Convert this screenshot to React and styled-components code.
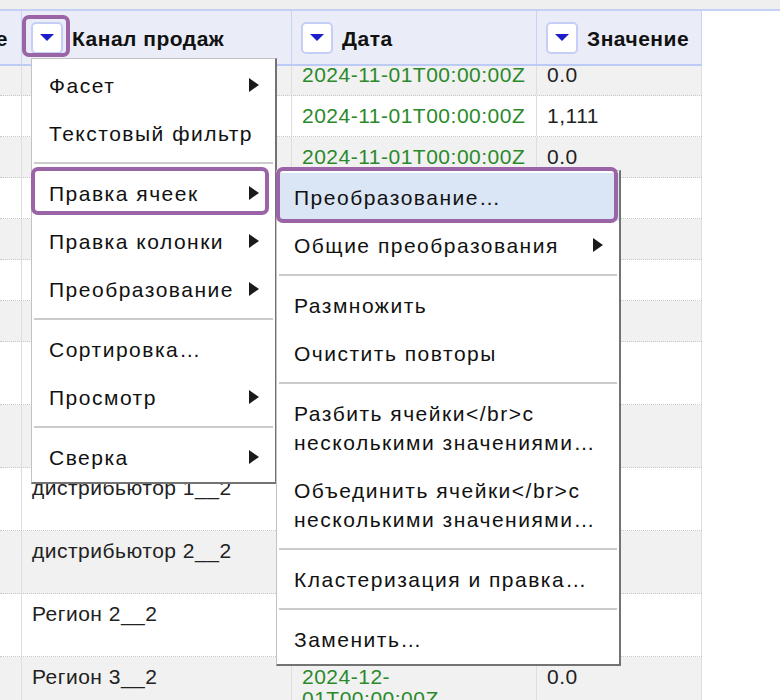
import React from 'react';
import styled, { createGlobalStyle, css } from 'styled-components';

const GlobalStyle = createGlobalStyle`
  html, body {
    margin: 0;
    padding: 0;
    background: #fff;
  }
  body {
    font-family: "Liberation Sans", Arial, sans-serif;
    overflow: hidden;
  }
`;

const COLS = '22px 270px 245px 165px';
const PURPLE = '#9b64a7';

const Page = styled.div`
  position: relative;
  width: 780px;
  height: 700px;
  overflow: hidden;
`;

const TopStrip = styled.div`
  height: 9px;
  background: #efefef;
  border-bottom: 2px solid #c4d0f6;
`;

const HeaderRow = styled.div`
  display: grid;
  grid-template-columns: ${COLS};
  width: 702px;
  height: 53px;
  background: #eaedf7;
  border-bottom: 2px solid #bccaf6;
`;

const HeaderCell = styled.div`
  display: flex;
  align-items: center;
  justify-content: ${p => (p.$clip ? 'flex-end' : 'flex-start')};
  gap: 9px;
  padding: ${p => (p.$clip ? '2px 13px 0 0' : '2px 0 0 9px')};
  border-right: 1px solid #c9d4f4;
  overflow: ${p => (p.$clip ? 'hidden' : 'visible')};
  font-size: 21px;
  letter-spacing: 0.5px;
  font-weight: 700;
  color: #111;
  white-space: nowrap;
`;

const DropButton = styled.span`
  position: relative;
  flex: none;
  width: 28px;
  height: 28px;
  margin-top: -2px;
  border: 2px solid #c5cff6;
  border-radius: 5px;
  background: #fff;
  display: flex;
  align-items: center;
  justify-content: center;

  &::before {
    content: '';
    border-top: 7px solid #1d1dc9;
    border-left: 7.5px solid transparent;
    border-right: 7.5px solid transparent;
  }

  ${p => p.$marked && css`
    &::after {
      content: '';
      position: absolute;
      inset: -9px -9px -5px -11px;
      border: 4px solid ${PURPLE};
      border-radius: 7px;
    }
  `}
`;

const Body = styled.div`
  height: 634px;
  overflow: hidden;
`;

const BodyInner = styled.div`
  margin-top: -11px;
`;

const Row = styled.div`
  display: grid;
  grid-template-columns: ${COLS};
  width: 702px;
  background: ${p => (p.$alt ? '#f1f1f1' : '#fff')};
  border-bottom: 1px dotted #c8c8c8;
`;

const Cell = styled.div`
  padding: 9px 10px;
  line-height: 22px;
  font-size: 21px;
  letter-spacing: 0.5px;
  color: ${p => (p.$date ? '#2a8a2a' : '#222')};
  border-right: 1px solid #dedede;
  overflow: hidden;
  white-space: nowrap;
`;

const Line = styled.span`
  display: block;
`;

const Menu = styled.div`
  position: absolute;
  left: ${p => p.$x}px;
  top: ${p => p.$y}px;
  width: ${p => p.$w}px;
  box-sizing: border-box;
  background: #fff;
  border: 1px solid #c3c3c3;
  border-right: 2px solid #737373;
  border-bottom: 2px solid #737373;
  padding: 2px 0 1px;
  font-size: 21px;
  letter-spacing: 1.5px;
  color: #111;
`;

const Item = styled.div`
  position: relative;
  display: flex;
  align-items: center;
  justify-content: space-between;
  box-sizing: border-box;
  min-height: 48px;
  padding: 9.5px 16px 9.5px 17px;
  line-height: 29px;
  white-space: nowrap;
  background: ${p => (p.$active ? '#dae5f6' : 'transparent')};

  ${p => p.$box && css`
    &::after {
      content: '';
      position: absolute;
      inset: ${p.$box.map(v => `${v}px`).join(' ')};
      border: 4px solid ${PURPLE};
      border-radius: 7px;
      pointer-events: none;
    }
  `}
`;

const Arrow = styled.span`
  flex: none;
  width: 0;
  height: 0;
  margin-left: 8px;
  border-left: 10px solid #1a1a1a;
  border-top: 7.5px solid transparent;
  border-bottom: 7.5px solid transparent;
`;

const Separator = styled.div`
  height: 2px;
  margin: 5px 2px;
  background: #cbcbcb;
`;

const NOV = ['2024-11-01T00:00:00Z'];
const DEC = ['2024-12-', '01T00:00:00Z'];

const rows = [
  { channel: 'дистрибьютор 1__1', date: NOV, value: '0.0' },
  { channel: 'дистрибьютор 2__1', date: NOV, value: '1,111' },
  { channel: 'Регион 1__1', date: NOV, value: '0.0' },
  { channel: 'Регион 2__1', date: NOV, value: '0.0' },
  { channel: 'Регион 3__1', date: NOV, value: '0.0' },
  { channel: 'Регион 1__2', date: NOV, value: '0.0' },
  { channel: 'Регион 4__1', date: NOV, value: '0.0' },
  { channel: 'Регион 5__1', date: DEC, value: '0.0' },
  { channel: 'Регион 6__1', date: DEC, value: '0.0' },
  { channel: 'дистрибьютор 1__2', date: DEC, value: '0.0' },
  { channel: 'дистрибьютор 2__2', date: DEC, value: '0.0' },
  { channel: 'Регион 2__2', date: DEC, value: '0.0' },
  { channel: 'Регион 3__2', date: DEC, value: '0.0' },
];

const columnMenu = [
  { label: 'Фасет', sub: true },
  { label: 'Текстовый фильтр' },
  'sep',
  { label: 'Правка ячеек', sub: true, box: [-2, 6, 2, -1] },
  { label: 'Правка колонки', sub: true },
  { label: 'Преобразование', sub: true },
  'sep',
  { label: 'Сортировка…' },
  { label: 'Просмотр', sub: true },
  'sep',
  { label: 'Сверка', sub: true },
];

const cellMenu = [
  { label: 'Преобразование…', active: true, box: [-6, 1, -2, -1] },
  { label: 'Общие преобразования', sub: true },
  'sep',
  { label: 'Размножить' },
  { label: 'Очистить повторы' },
  'sep',
  { label: ['Разбить ячейки</br>с', 'несколькими значениями…'] },
  { label: ['Объединить ячейки</br>с', 'несколькими значениями…'] },
  'sep',
  { label: 'Кластеризация и правка…' },
  'sep',
  { label: 'Заменить…' },
];

const MenuList = ({ items, x, y, w }) => (
  <Menu $x={x} $y={y} $w={w}>
    {items.map((it, i) =>
      it === 'sep' ? (
        <Separator key={i} />
      ) : (
        <Item key={i} $active={it.active} $box={it.box}>
          <span>
            {Array.isArray(it.label)
              ? it.label.map(l => <Line key={l}>{l}</Line>)
              : it.label}
          </span>
          {it.sub && <Arrow />}
        </Item>
      )
    )}
  </Menu>
);

const App = () => {
  return (
    <Page>
      <GlobalStyle />
      <TopStrip />
      <HeaderRow>
        <HeaderCell $clip>е</HeaderCell>
        <HeaderCell>
          <DropButton $marked />
          Канал продаж
        </HeaderCell>
        <HeaderCell>
          <DropButton />
          Дата
        </HeaderCell>
        <HeaderCell>
          <DropButton />
          Значение
        </HeaderCell>
      </HeaderRow>
      <Body>
        <BodyInner>
          {rows.map((r, i) => (
            <Row key={i} $alt={i % 2 === 0}>
              <Cell />
              <Cell>{r.channel}</Cell>
              <Cell $date>
                {r.date.map(l => <Line key={l}>{l}</Line>)}
              </Cell>
              <Cell>{r.value}</Cell>
            </Row>
          ))}
        </BodyInner>
      </Body>

      <MenuList items={columnMenu} x={31} y={58} w={246} />
      <MenuList items={cellMenu} x={276} y={170} w={345} />
    </Page>
  );
};

export default App;
